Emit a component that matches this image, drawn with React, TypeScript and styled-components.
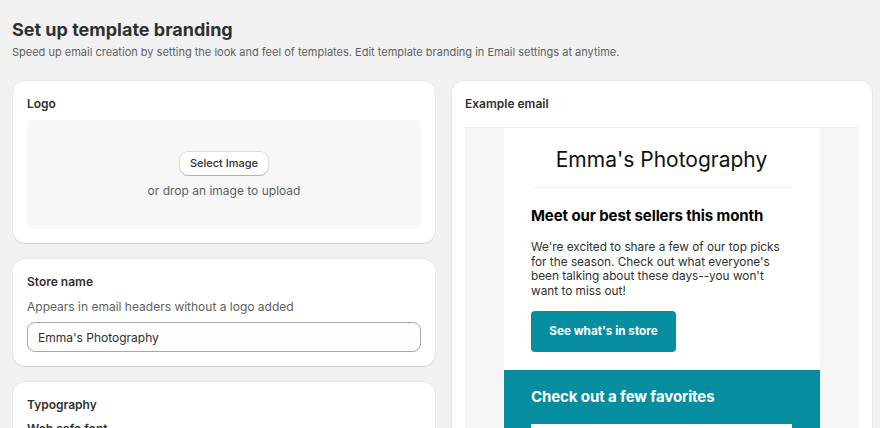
import React from "react";
import styled, { createGlobalStyle } from "styled-components";

const Global = createGlobalStyle`
  html, body { margin: 0; padding: 0; background: #f1f1f1; }
  body { font-family: Inter, "Noto Sans", sans-serif; color: #303030; -webkit-font-smoothing: antialiased; }
  * { box-sizing: border-box; }
`;

const Page = styled.div`
  padding: 18px 8px 0 13px;
  height: 428px;
  overflow: hidden;
`;

const Title = styled.h1`
  margin: 0 0 0 -1px;
  font-size: 18px;
  line-height: 24px;
  font-weight: 700;
  color: #303030;
`;

const Subtitle = styled.p`
  margin: 2px 0 0 -1px;
  font-size: 11px;
  line-height: 16px;
  color: #616161;
`;

const Columns = styled.div`
  display: grid;
  grid-template-columns: 422px 420px;
  column-gap: 17px;
  margin-top: 21px;
  align-items: start;
`;

const Stack = styled.div`
  display: flex;
  flex-direction: column;
  gap: 16px;
`;

const Card = styled.section<{ $tall?: boolean }>`
  background: #fff;
  border-radius: 12px;
  padding: 14px 14px 14px;
  box-shadow: 0 1px 1px rgba(0, 0, 0, 0.1), 0 0 0 1px rgba(0, 0, 0, 0.035);
  ${(p) => (p.$tall ? "min-height: 400px; padding-right: 13px; padding-left: 13px;" : "")}
`;

const CardLabel = styled.h2<{ $gap?: number }>`
  margin: 0 0 ${(p) => p.$gap ?? 8}px;
  font-size: 12px;
  line-height: 18px;
  font-weight: 600;
  color: #303030;
`;

const Dropzone = styled.div`
  height: 109px;
  background: #f7f7f7;
  border-radius: 6px;
  display: flex;
  flex-direction: column;
  align-items: center;
  justify-content: center;
  gap: 8px;
  padding-top: 1px;
`;

const SecondaryButton = styled.button`
  height: 23px;
  padding: 0 10px;
  border: none;
  border-radius: 8px;
  background: #fff;
  font-family: inherit;
  font-size: 11px;
  font-weight: 500;
  color: #303030;
  box-shadow: 0 1px 0 rgba(0, 0, 0, 0.2), 0 0 0 1px rgba(0, 0, 0, 0.1);
  cursor: pointer;
`;

const Muted = styled.p`
  margin: 0;
  font-size: 12px;
  line-height: 16px;
  color: #616161;
`;

const Help = styled.p`
  margin: 0 0 7px;
  font-size: 12px;
  line-height: 16px;
  color: #616161;
`;

const TextInput = styled.input`
  display: block;
  width: 100%;
  height: 30px;
  border: 1px solid #a8a8a8;
  border-radius: 8px;
  background: #fdfdfd;
  padding: 0 10px;
  font-family: inherit;
  font-size: 12px;
  color: #303030;
  outline: none;
`;

const SubLabel = styled.p`
  margin: 6px 0 0;
  font-size: 12px;
  line-height: 18px;
  font-weight: 600;
  color: #303030;
`;

const Preview = styled.div`
  background: #f6f6f6;
  border-top: 1px solid #ececec;
  display: flex;
  justify-content: center;
  height: 320px;
  overflow: hidden;
`;

const Email = styled.div`
  width: 316px;
  background: #fff;
`;

const EmailHeader = styled.div`
  padding: 18px 28px 0 27px;
  text-align: center;
`;

const StoreTitle = styled.div`
  font-size: 21px;
  line-height: 28px;
  color: #111;
`;

const Divider = styled.div`
  height: 1px;
  background: #f2f2f2;
  margin-top: 13px;
`;

const EmailBody = styled.div`
  padding: 18px 28px 18px 27px;
`;

const Headline = styled.h3<{ $light?: boolean }>`
  margin: 0;
  font-size: 15px;
  line-height: 20px;
  font-weight: 700;
  color: ${(p) => (p.$light ? "#fff" : "#000")};
  letter-spacing: -0.1px;
`;

const Paragraph = styled.p`
  margin: 14px 0 12px;
  font-size: 11.8px;
  line-height: 14.7px;
  color: #303030;
`;

const CTA = styled.button`
  width: 145px;
  height: 41px;
  border: none;
  border-radius: 4px;
  background: #068ea0;
  color: #fff;
  font-family: inherit;
  font-size: 11.7px;
  font-weight: 700;
`;

const Band = styled.div`
  background: #068ea0;
  padding: 17px 28px 0 27px;
  height: 200px;
`;

const ProductBox = styled.div`
  margin-top: 17px;
  height: 60px;
  background: #fff;
`;

export default function App() {
  return (
    <>
      <Global />
      <Page>
        <Title>Set up template branding</Title>
        <Subtitle>
          Speed up email creation by setting the look and feel of templates. Edit template branding in Email settings at anytime.
        </Subtitle>
        <Columns>
          <Stack>
            <Card>
              <CardLabel $gap={7}>Logo</CardLabel>
              <Dropzone>
                <SecondaryButton>Select Image</SecondaryButton>
                <Muted>or drop an image to upload</Muted>
              </Dropzone>
            </Card>
            <Card>
              <CardLabel $gap={8}>Store name</CardLabel>
              <Help>Appears in email headers without a logo added</Help>
              <TextInput defaultValue="Emma's Photography" />
            </Card>
            <Card>
              <CardLabel $gap={0}>Typography</CardLabel>
              <SubLabel>Web safe font</SubLabel>
            </Card>
          </Stack>
          <Card $tall>
            <CardLabel $gap={14}>Example email</CardLabel>
            <Preview>
              <Email>
                <EmailHeader>
                  <StoreTitle>Emma's Photography</StoreTitle>
                  <Divider />
                </EmailHeader>
                <EmailBody>
                  <Headline>Meet our best sellers this month</Headline>
                  <Paragraph>
                    We're excited to share a few of our top picks for the season. Check out what everyone's been talking about these days--you won't want to miss out!
                  </Paragraph>
                  <CTA>See what's in store</CTA>
                </EmailBody>
                <Band>
                  <Headline $light>Check out a few favorites</Headline>
                  <ProductBox />
                </Band>
              </Email>
            </Preview>
          </Card>
        </Columns>
      </Page>
    </>
  );
}
